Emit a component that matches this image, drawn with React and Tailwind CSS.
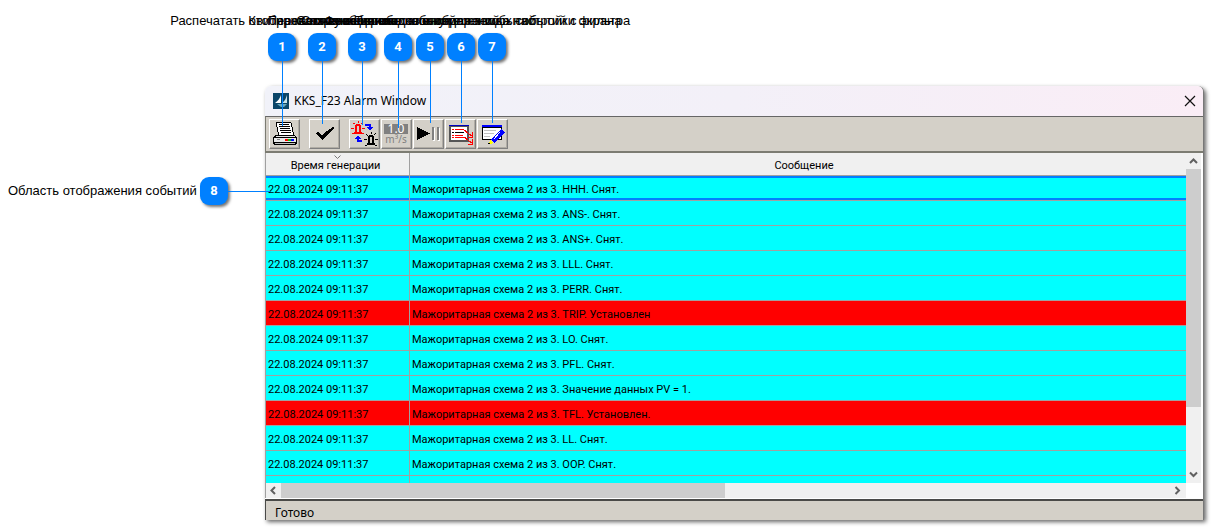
const callouts = [
  { id: 1, text: "Распечатать отображаемые события", place: "left-[132px]", line: "h-[65px]" },
  { id: 2, text: "Квитировать сообщения", place: "left-[172px]", line: "h-[63px]" },
  { id: 3, text: "Переключение списка событий", place: "left-[212px]", line: "h-[64px]" },
  { id: 4, text: "Состояние сигналов и измерений", place: "left-[248px]", line: "h-[67px]" },
  { id: 5, text: "Функция обновления всех событий", place: "left-[280px]", line: "h-[62px]" },
  { id: 6, text: "Сохранение списка отображаемых событий с экрана", place: "left-[311px]", line: "h-[62px]" },
  { id: 7, text: "Переход к окну для ввода настройки фильтра", place: "left-[342px]", line: "h-[62px]" },
];

const time = "22.08.2024 09:11:37";

const events = [
  { signal: "HHH. Снят.", selected: true },
  { signal: "ANS-. Снят." },
  { signal: "ANS+. Снят." },
  { signal: "LLL. Снят." },
  { signal: "PERR. Снят." },
  { signal: "TRIP. Установлен", alarm: true },
  { signal: "LO. Снят." },
  { signal: "PFL. Снят." },
  { signal: "Значение данных PV = 1." },
  { signal: "TFL. Установлен.", alarm: true },
  { signal: "LL. Снят." },
  { signal: "OOP. Снят." },
];

export default function App() {
  return (
    <div className="relative bg-white pt-[86px] pr-[9px] pb-2 font-['Liberation_Sans',sans-serif] text-black">
      <div className="flex items-start">
        <div className="mt-[91px] flex w-[265px] shrink-0 items-center gap-1 pl-2">
          <span className="w-[188px] text-[13px] leading-4 whitespace-nowrap">Область отображения событий</span>
          <Marker>8</Marker>
        </div>
        <AlarmWindow />
      </div>

      {callouts.map((item) => (
        <div key={item.id} className={`pointer-events-none absolute top-[13px] flex w-[300px] flex-col items-center ${item.place}`}>
          <span className="mb-1 text-[13px] leading-4 whitespace-nowrap">{item.text}</span>
          <Marker>{item.id}</Marker>
          <span className={`w-px bg-[#0080ff] ${item.line}`} />
        </div>
      ))}
      <span className="absolute top-[191px] left-[228px] h-px w-[42px] bg-[#0080ff]" />
    </div>
  );
}

function Marker({ children }) {
  return (
    <span className="flex h-7 w-7 shrink-0 items-center justify-center rounded-[9px] bg-[#0080ff] font-[Roboto,sans-serif] text-[13px] font-bold text-white shadow-[2px_2px_3px_rgba(0,0,0,0.55)]">
      {children}
    </span>
  );
}

function AlarmWindow() {
  return (
    <main className="min-w-0 flex-1 rounded-t-md border-r border-[#777] bg-white font-['Noto_Sans',sans-serif] shadow-[2px_2px_4px_rgba(0,0,0,0.6)]">
      <header className="flex h-[30px] items-center justify-between rounded-t-md bg-[linear-gradient(90deg,#f1f2f9,#f3f0f8_50%,#faedf6)] pr-[7px] pl-2">
        <div className="flex items-center gap-[5px]">
          <AppLogo />
          <h1 className="text-xs">KKS_F23 Alarm Window</h1>
        </div>
        <button type="button" aria-label="Закрыть">
          <svg width="12" height="12" viewBox="0 0 12 12" stroke="#111" strokeWidth="1.2">
            <path d="M1 1l10 10M11 1L1 11" />
          </svg>
        </button>
      </header>

      <Toolbar />

      <div className="grid grid-cols-[minmax(0,1fr)_15px] border-l border-[#a0a0a0] pr-0.5">
        <div className="h-[330px] overflow-hidden">
          <EventTable />
        </div>
        <div className="flex flex-col bg-[#f0f0f0]">
          <ScrollButton label="Вверх" size="h-4" path="M1 6l3.5-3.5L8 6" />
          <div className="h-[238px] bg-[#cdcdcd]" />
          <div className="flex-1" />
          <ScrollButton label="Вниз" size="h-[18px]" path="M1 2.5L4.5 6 8 2.5" />
        </div>
        <div className="flex h-[15px] bg-[#f0f0f0]">
          <ScrollButton label="Влево" size="w-[15px]" path="M6 1L2.5 4.5 6 8" />
          <div className="w-[444px] bg-[#cdcdcd]" />
          <div className="flex-1" />
          <ScrollButton label="Вправо" size="w-[18px]" path="M2.5 1L6 4.5 2.5 8" />
        </div>
      </div>

      <footer className="mt-px h-[21px] overflow-hidden border-t-2 border-l border-[#4a4a48] bg-[#d4d0c8] pt-1 pl-[9px] text-xs leading-4">
        Готово
      </footer>
    </main>
  );
}

function ScrollButton({ label, size, path }) {
  return (
    <button type="button" aria-label={label} className={`flex shrink-0 items-center justify-center ${size}`}>
      <svg width="9" height="9" viewBox="0 0 9 9" fill="none" stroke="#606060" strokeWidth="2">
        <path d={path} />
      </svg>
    </button>
  );
}

function EventTable() {
  return (
    <table className="w-full table-fixed border-separate border-spacing-0 font-[Roboto,sans-serif] text-[11px] leading-4 whitespace-nowrap">
      <thead>
        <tr className="h-[23px] bg-[#f0f0f0]">
          <th className="relative w-36 border-r border-b border-[#a0a0a0] p-0 pt-1 pr-1 font-normal">
            <svg className="absolute top-0.5 left-[68px]" width="7" height="4" viewBox="0 0 7 4" fill="none" stroke="#777">
              <path d="M0.5 0.5l3 3 3-3" />
            </svg>
            Время генерации
          </th>
          <th className="border-b border-[#a0a0a0] p-0 pt-1 pl-3 font-normal">Сообщение</th>
        </tr>
      </thead>
      <tbody>
        {events.map((event) => (
          <tr key={event.signal} className={`h-[25px] ${event.alarm ? "bg-[#ff0000]" : "bg-[#00ffff]"}`}>
            {[time, `Мажоритарная схема 2 из 3. ${event.signal}`].map((text, column) => (
              <td
                key={text}
                className={`border-b border-[#a0a0a0] p-0 pt-1 pl-0.5 ${column === 0 ? "border-r" : ""} ${
                  event.selected ? "shadow-[inset_0_2px_#0080ff,inset_0_-2px_#0080ff]" : ""
                }`}
              >
                {text}
              </td>
            ))}
          </tr>
        ))}
        <tr className="h-[7px] bg-[#00ffff]">
          <td className="border-r border-[#a0a0a0] p-0" />
          <td className="p-0" />
        </tr>
      </tbody>
    </table>
  );
}

function Toolbar() {
  return (
    <div className="flex h-[37px] items-start gap-[9px] border-t border-b-2 border-l border-[#7c7c72] border-t-[#666] bg-[#d4d0c8] pt-0.5 pl-[3px]">
      <ToolButton label="Печать">
        <PrinterIcon />
      </ToolButton>
      <ToolButton label="Квитировать">
        <path d="M5 13l3-1 4 4c3-4 7-7 11-9h1v2c-4 3-7 6-11 11h-1z" fill="#000" />
      </ToolButton>
      <div className="flex gap-px">
        <ToolButton label="Переключить список">
          <LampsIcon />
        </ToolButton>
        <ToolButton label="Единицы измерения">
          <path d="M2 4h24v10H2z" fill="#808080" />
          <text x="14" y="13" textAnchor="middle" fontSize="12" fill="#fff">1.0</text>
          <text x="14" y="23" textAnchor="middle" fontSize="10" fill="#808080">m³/s</text>
        </ToolButton>
        <ToolButton label="Пауза">
          <path d="M3 7l13 6.5L3 20z" fill="#000" />
          <path d="M20 8h1v13h-2v-1h1zM25 8h1v13h-2v-1h1z" fill="#fff" />
          <path d="M18 7h2v13h-2zM23 7h2v13h-2z" fill="#808080" />
        </ToolButton>
        <ToolButton label="Сохранить список">
          <SaveListIcon />
        </ToolButton>
        <ToolButton label="Настройка фильтра">
          <EditFilterIcon />
        </ToolButton>
      </div>
    </div>
  );
}

function ToolButton({ label, children }) {
  return (
    <button
      type="button"
      aria-label={label}
      className="h-[30px] w-[31px] border border-t-white border-r-[#808080] border-b-[#808080] border-l-white shadow-[inset_-1px_-1px_#b0aca4]"
    >
      <svg width="29" height="28" viewBox="0 0 29 28" shapeRendering="crispEdges">
        {children}
      </svg>
    </button>
  );
}

function PrinterIcon() {
  return (
    <>
      <path d="M6 2h15l3 13H8z" fill="#fff" />
      <path d="M6 2h15v1H6zM6 3h1v4H6zM7 7h1v5H7zM8 12h1v4H8zM21 3h1v4h-1zM22 7h1v5h-1zM23 12h1v4h-1z" fill="#000" />
      <path d="M9 4h10v1H9zM9 6h11v1H9zM10 8h10v1H10zM10 10h11v1H10zM11 12h10v1H11z" fill="#000" />
      <path d="M5 15h20v1h1v1h1v7h-1v1H4v-1H3v-7h1v-1h1z" fill="#000" />
      <path d="M6 16h19v1H5zM4 18h22v4H4z" fill="#e8e8e8" />
      <path d="M5 23h20v1H5z" fill="#c0c0c0" />
      <path d="M7 19h3v1H7z" fill="#808080" />
      <path d="M15 19h3v2h-3z" fill="#f00" />
      <path d="M18 19h3v2h-3z" fill="#0c0" />
      <path d="M21 19h3v2h-3z" fill="#00f" />
    </>
  );
}

function LampsIcon() {
  return (
    <>
      <path d="M6 4h4v1h1v7h1v2H4v-2h1V5h1zM7 6v6h2V6z" fill="#f00" fillRule="evenodd" />
      <path d="M8 1v2M3 3l2 1M13 2l-2 2M1 8h3M12 8h3M2 14l2-1M14 14l-2-1" fill="none" stroke="#f00" />
      <path d="M19 15h4v1h1v7h1v2h-8v-2h1v-7h1zM20 17v6h2v-6z" fill="#000" fillRule="evenodd" />
      <path d="M21 12v2M16 14l2 2M26 13l-2 2M14 19h3M25 19h3M15 26l2-1M27 26l-2-1" fill="none" stroke="#000" />
      <path d="M15 4h6v3h2v1h-1v1h-1v1h-2V9h-1V8h-1V7h2V6h-4zM12 22H7v-3H5v-1h1v-1h1v-1h2v1h1v1h1v1H9v1h3z" fill="#00f" />
    </>
  );
}

function SaveListIcon() {
  return (
    <>
      <path d="M3 5h20v17H3z" fill="#555" />
      <path d="M5 7h16v13H5z" fill="#fff" />
      <path d="M3 5h20v1H3z" fill="#0000c0" />
      <path d="M6 9h2v1H6zM9 9h9v1H9zM6 15h2v1H6zM9 15h8v1H9zM6 17h2v1H6zM9 17h9v1H9z" fill="#f00" />
      <path d="M6 12h2v1H6zM9 12h9v1H9z" fill="#000" />
      <path d="M18 10l8 6M18 17l8 6M26 12v5h-4M26 19v5h-4" fill="none" stroke="#f00" />
    </>
  );
}

function EditFilterIcon() {
  return (
    <>
      <path d="M4 5h20v15H4z" fill="#000" />
      <path d="M5 8h18v11H5z" fill="#fff" />
      <path d="M4 5h20v2H4z" fill="#0000ff" />
      <path d="M6 10h12v1H6zM6 13h10v1H6zM6 16h6v1H6z" fill="#c0c0c0" />
      <path d="M23 9l4 3-10 11-4-3z" fill="#0000ff" />
      <path d="M22 12l-6 7" stroke="#fff" />
      <path d="M12 20l4 3-5 1z" fill="#ff0" />
      <path d="M10 23h2v1h-2z" fill="#000" />
    </>
  );
}

function AppLogo() {
  return (
    <svg width="16" height="16" viewBox="0 0 16 16">
      <path d="M0 0h16v16H0z" fill="#0b4669" />
      <path d="M8 2v8H2c3-2 5-5 6-8z" fill="#fff" />
      <path d="M14 2v8H9c3-2 4-5 5-8z" fill="#c8e4ed" />
      <path d="M4 11h10l-3 3H8z" fill="#69a9bd" />
    </svg>
  );
}
